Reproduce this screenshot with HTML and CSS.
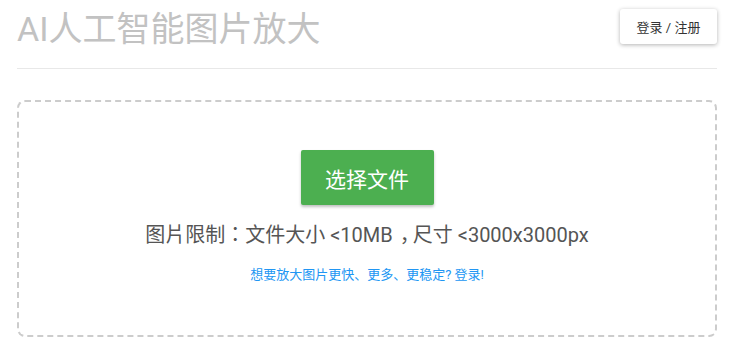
FILE: index.html
```html
<!DOCTYPE html>
<html lang="zh-CN">
<head>
    <meta charset="UTF-8">
    <title>AI人工智能图片放大</title>
    <link rel="stylesheet" href="styles.css">
</head>
<body>
    <div class="page">
        <header class="header">
            <h1 class="title">AI人工智能图片放大</h1>
            <button type="button" class="login-btn">登录 / 注册</button>
        </header>
        <div class="upload-box">
            <button type="button" class="choose-btn">选择文件</button>
            <p class="limit" lang="zh-TW">图片限制：文件大小 &lt;10MB<span class="comma" lang="zh-CN">，</span>尺寸 &lt;3000x3000px</p>
            <a class="tip" href="#">想要放大图片更快、更多、更稳定? 登录!</a>
        </div>
    </div>
</body>
</html>
```

FILE: styles.css
```css
body {
    margin: 0;
    font-family: Roboto, "Noto Sans CJK SC", sans-serif;
    background: #fff;
}

.page {
    width: 700px;
    margin-left: 17px;
}

.header {
    display: flex;
    justify-content: space-between;
    align-items: flex-start;
    height: 68px;
    border-bottom: 1px solid #e8e8e8;
}

.title {
    margin: 8px 0 0;
    font-size: 34px;
    font-weight: 400;
    color: #c2c2c2;
    line-height: 42px;
}

.login-btn {
    margin-top: 9px;
    width: 97px;
    height: 35px;
    border: none;
    border-radius: 3px;
    background: #fff;
    box-shadow: 0 1px 4px rgba(0, 0, 0, 0.3);
    font-family: inherit;
    font-size: 13px;
    color: #333;
}

.upload-box {
    margin-top: 31px;
    height: 233px;
    border: 2px dashed #ccc;
    border-radius: 8px;
    display: flex;
    flex-direction: column;
    align-items: center;
}

.choose-btn {
    margin-top: 48px;
    width: 133px;
    height: 55px;
    border: none;
    border-radius: 2px;
    background: #4caf50;
    box-shadow: 0 2px 3px rgba(0, 0, 0, 0.25);
    color: #fff;
    font-family: inherit;
    font-size: 21px;
}

/* TC variant centres the full-width colon */
.limit {
    margin: 16px 0 0;
    font-family: Roboto, "Noto Sans CJK TC", sans-serif;
    font-size: 20px;
    color: #555;
    line-height: 28px;
}

/* comma sits on the baseline but in the middle of its box */
.limit .comma {
    font-family: Roboto, "Noto Sans CJK SC", sans-serif;
    padding-left: 7px;
    letter-spacing: -7px;
}

.tip {
    margin-top: 15px;
    font-size: 13px;
    color: #2196f3;
    text-decoration: none;
}
```
